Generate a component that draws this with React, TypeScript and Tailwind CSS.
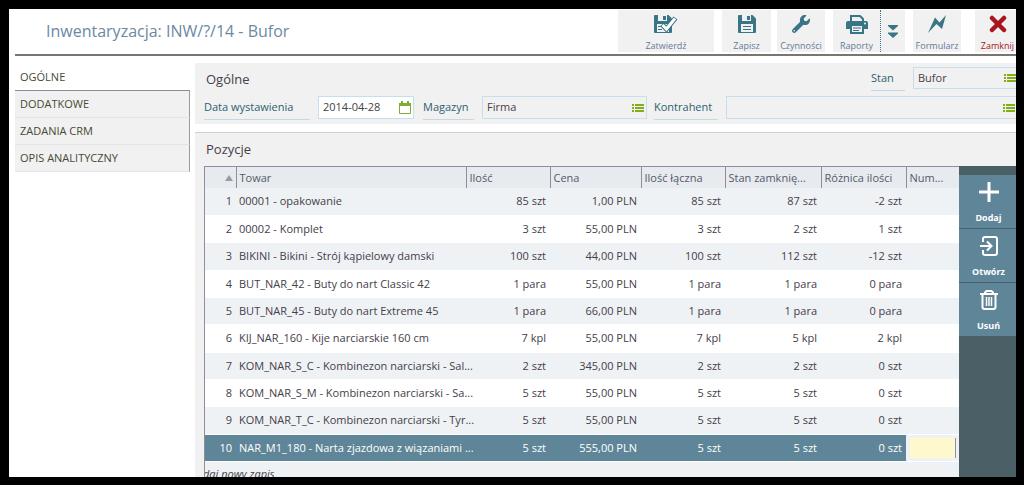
import type { ReactNode } from 'react';

const tabs = ['OGÓLNE', 'DODATKOWE', 'ZADANIA CRM', 'OPIS ANALITYCZNY'];

const columns = [
  { label: '', width: 'w-[31px]' },
  { label: 'Towar', width: '' },
  { label: 'Ilość', width: 'w-[84px]' },
  { label: 'Cena', width: 'w-[91px]' },
  { label: 'Ilość łączna', width: 'w-[84px]' },
  { label: 'Stan zamknięcia', short: 'Stan zamknię...', width: 'w-[96px]' },
  { label: 'Różnica ilości', width: 'w-[85px]' },
  { label: 'Numer', short: 'Num...', width: 'w-[53px]' },
];

const rows = [
  { name: '00001 - opakowanie', values: ['85 szt', '1,00 PLN', '85 szt', '87 szt', '-2 szt'] },
  { name: '00002 - Komplet', values: ['3 szt', '55,00 PLN', '3 szt', '2 szt', '1 szt'] },
  { name: 'BIKINI - Bikini - Strój kąpielowy damski', values: ['100 szt', '44,00 PLN', '100 szt', '112 szt', '-12 szt'] },
  { name: 'BUT_NAR_42 - Buty do nart Classic 42', values: ['1 para', '55,00 PLN', '1 para', '1 para', '0 para'] },
  { name: 'BUT_NAR_45 - Buty do nart Extreme 45', values: ['1 para', '66,00 PLN', '1 para', '1 para', '0 para'] },
  { name: 'KIJ_NAR_160 - Kije narciarskie 160 cm', values: ['7 kpl', '55,00 PLN', '7 kpl', '5 kpl', '2 kpl'] },
  { name: 'KOM_NAR_S_C - Kombinezon narciarski - Sal...', values: ['2 szt', '345,00 PLN', '2 szt', '2 szt', '0 szt'] },
  { name: 'KOM_NAR_S_M - Kombinezon narciarski - Sa...', values: ['5 szt', '55,00 PLN', '5 szt', '5 szt', '0 szt'] },
  { name: 'KOM_NAR_T_C - Kombinezon narciarski - Tyr...', values: ['5 szt', '55,00 PLN', '5 szt', '5 szt', '0 szt'] },
  { name: 'NAR_M1_180 - Narta zjazdowa z wiązaniami ...', values: ['5 szt', '555,00 PLN', '5 szt', '5 szt', '0 szt'], selected: true },
];

const SaveIcon = () => (
  <svg width="18" height="18" viewBox="0 0 18 18" fill="none">
    <path d="M1 0h13.500L18 3.500V17a1 1 0 0 1-1 1H1a1 1 0 0 1-1-1V1a1 1 0 0 1 1-1z" fill="#397587" />
    <path d="M4 0h9v6H4zM3 9h12v8H3z" fill="#f1f1f1" />
    <path d="M9 1h3v4H9zM5 11h8v1H5zM5 14h8v1H5z" fill="#397587" />
  </svg>
);

const ApproveIcon = () => (
  <svg width="24" height="18" viewBox="0 0 24 18" fill="none">
    <path d="M1 0h13.500L18 3.500V17a1 1 0 0 1-1 1H1a1 1 0 0 1-1-1V1a1 1 0 0 1 1-1z" fill="#397587" />
    <path d="M4 0h9v6H4zM3 9h12v8H3z" fill="#f1f1f1" />
    <path d="M9 1h3v4H9zM4 11h4v1H4zM4 14h4v1H4z" fill="#397587" />
    <path d="M8 9.500l4.500 4.500L21.500 3" stroke="#397587" strokeWidth="5" />
    <path d="M8.500 10l4 4L21 3.500" stroke="#fff" strokeWidth="3" />
  </svg>
);

const WrenchIcon = () => (
  <svg width="18" height="18" viewBox="0 0 512 512" fill="#397587">
    <path d="M507.730 109.100c-2.240-9.030-13.540-12.090-20.120-5.510l-74.360 74.360-67.880-11.310-11.310-67.880 74.360-74.360c6.620-6.620 3.430-17.900-5.660-20.160-47.380-11.740-99.550.91-136.580 37.930-39.640 39.640-50.550 97.100-34.050 147.200L18.740 402.760c-24.990 24.990-24.990 65.510 0 90.500 24.990 24.990 65.510 24.990 90.500 0l213.210-213.210c50.120 16.710 107.470 5.680 147.370-34.220 37.070-37.070 49.700-89.320 37.910-136.730zM64 472c-13.250 0-24-10.750-24-24 0-13.260 10.750-24 24-24s24 10.740 24 24c0 13.250-10.750 24-24 24z" />
  </svg>
);

const PrintIcon = () => (
  <svg width="22" height="19" viewBox="0 0 22 19" fill="none">
    <path d="M5 6V1h9l3 3v2" stroke="#397587" strokeWidth="2" />
    <path d="M2 6h18a2 2 0 0 1 2 2v6h-4v-3H4v3H0V8a2 2 0 0 1 2-2z" fill="#397587" />
    <path d="M5 10h12v8H5z" fill="#f1f1f1" stroke="#397587" strokeWidth="2" />
    <path d="M7 13h8M7 15.500h6" stroke="#397587" />
    <circle cx="19" cy="8.500" r="1" fill="#f1f1f1" />
  </svg>
);

const MoreIcon = () => (
  <svg width="10" height="13" viewBox="0 0 10 13" fill="#397587">
    <path d="M0 0h10v1L5 5.500 0 1zM0 7.500h10v1L5 13 0 8.500z" />
  </svg>
);

const BoltIcon = () => (
  <svg width="18" height="18" viewBox="0 0 18 18" fill="#397587">
    <path d="M7 2.500l4.500 5L18 0l-4 14-5.500-5L0 18z" />
  </svg>
);

const CloseIcon = () => (
  <svg width="18" height="18" viewBox="0 0 18 18" stroke="#a9151c" strokeWidth="4.500" strokeLinecap="round">
    <path d="M3 3l12 12M15 3L3 15" />
  </svg>
);

const CalendarIcon = () => (
  <svg className="shrink-0" width="12" height="13" viewBox="0 0 12 13" fill="none">
    <path d="M.5 3h11v9.500H.5z" stroke="#7fad33" />
    <path d="M0 2h12v3H0zM2 0h2v3H2zM8 0h2v3H8z" fill="#7fad33" />
  </svg>
);

const ListIcon = () => (
  <svg className="shrink-0" width="12" height="8" viewBox="0 0 12 8" fill="#84ad1c">
    <path d="M0 0h2v2H0zM3 0h9v2H3zM0 3h2v2H0zM3 3h9v2H3zM0 6h2v2H0zM3 6h9v2H3z" />
  </svg>
);

const PlusIcon = () => (
  <svg width="20" height="20" viewBox="0 0 20 20" stroke="#fff" strokeWidth="3">
    <path d="M10 0v20M0 10h20" />
  </svg>
);

const OpenIcon = () => (
  <svg width="18" height="20" viewBox="0 0 18 20" fill="none" stroke="#fff" strokeWidth="2">
    <path d="M3 6V3a2 2 0 0 1 2-2h10a2 2 0 0 1 2 2v14a2 2 0 0 1-2 2H5a2 2 0 0 1-2-2v-3M0 10h11M7 5.500l4.500 4.500L7 14.500" />
  </svg>
);

const TrashIcon = () => (
  <svg width="18" height="20" viewBox="0 0 18 20" fill="none" stroke="#fff" strokeWidth="2">
    <path d="M0 4h18M5 4V2.500L6.500 1h5L13 2.500V4M2.500 4v13a2 2 0 0 0 2 2h9a2 2 0 0 0 2-2V4" />
    <path d="M6.500 7v9M9 7v9M11.500 7v9" strokeWidth="1.500" />
  </svg>
);

const ToolButton = ({ label, icon, className }: { label: string; icon: ReactNode; className: string }) => (
  <button type="button" className={`flex h-[42px] shrink-0 flex-col items-center justify-between bg-[#f1f1f1] pt-1 text-[9px] leading-3 ${className}`}>
    <span className="flex h-5 items-center">{icon}</span>
    <span>{label}</span>
  </button>
);

const SideButton = ({ label, icon }: { label: string; icon: ReactNode }) => (
  <button type="button" className="flex h-[54px] flex-col items-center justify-between border-b border-[#46606c] bg-[#5f8698] pt-[7px] pb-1 pl-0.5 text-[9px] leading-3 font-bold text-white">
    {icon}
    <span>{label}</span>
  </button>
);

const labelClass = 'h-6 border-b border-[#c3d9e4] text-[11px] leading-[22px] whitespace-nowrap text-[#2c6170]';
const inputClass = 'w-full min-w-0 bg-transparent px-1 text-[11px] text-[#454049] outline-none';

const App = () => {
  return (
    <div className="h-screen overflow-hidden bg-black pt-[9px] pr-2 pb-2 pl-[9px] font-['Open_Sans',sans-serif] text-[#454049]">
      <div className="flex h-full flex-col overflow-hidden bg-white pl-1.5">
        <header className="flex h-[47px] shrink-0 items-start border-b-2 border-[#77776f]">
          <h1 className="flex-1 pt-2 pl-[31px] text-base leading-7 whitespace-nowrap text-[#6c88a2]">Inwentaryzacja: INW/?/14 - Bufor</h1>
          <div className="flex pt-px text-[#647b98]">
            <ToolButton label="Zatwierdź" icon={<ApproveIcon />} className="w-24" />
            <ToolButton label="Zapisz" icon={<SaveIcon />} className="ml-2 w-[49px]" />
            <ToolButton label="Czynności" icon={<WrenchIcon />} className="ml-1.5 w-12" />
            <ToolButton label="Raporty" icon={<PrintIcon />} className="ml-2 w-12 border-r border-dotted border-[#397587]" />
            <button type="button" aria-label="Więcej raportów" className="flex h-[42px] w-6 items-center justify-center bg-[#f1f1f1]">
              <MoreIcon />
            </button>
            <ToolButton label="Formularz" icon={<BoltIcon />} className="ml-2 w-12" />
            <ToolButton label="Zamknij" icon={<CloseIcon />} className="ml-3.5 w-[41px] pl-1 text-[#a9151c]" />
          </div>
        </header>

        <div className="flex min-h-0 flex-1 pt-[7px]">
          {/* Tabs */}
          <nav className="w-[175px] shrink-0 text-[11px] leading-[26px] text-[#454a35]">
            {tabs.map((tab, i) => (
              <a
                key={tab}
                href="#"
                className={i === 0
                  ? 'block h-7 border-b border-[#8b8b99] pt-px pl-[5px]'
                  : 'block border-r border-b border-r-[#9a9aa5] border-b-[#e4e4e4] bg-[#f1f1f1] pl-[5px]'}
              >
                {tab}
              </a>
            ))}
          </nav>

          <main className="ml-[5px] flex min-w-0 flex-1 flex-col bg-[#f1f1f1]">
            {/* General data */}
            <section className="border-b-8 border-white pb-1">
              <div className="flex pt-1">
                <h2 className="flex-1 pl-[11px] text-[13px] leading-6">Ogólne</h2>
                <label htmlFor="status" className={`w-[34px] ${labelClass}`}>Stan</label>
                <div className="ml-2 flex h-[22px] w-[103px] items-center border border-r-0 border-[#c5e0ec]">
                  <input id="status" defaultValue="Bufor" className={inputClass} />
                  <ListIcon />
                </div>
              </div>
              <div className="mt-[5px] flex pl-[9px]">
                <label htmlFor="date" className={`w-[106px] ${labelClass}`}>Data wystawienia</label>
                <div className="ml-2 flex h-[23px] w-24 items-center border border-[#c5e0ec] bg-white pr-0.5">
                  <input id="date" defaultValue="2014-04-28" className={inputClass} />
                  <CalendarIcon />
                </div>
                <label htmlFor="store" className={`ml-[9px] w-[51px] ${labelClass}`}>Magazyn</label>
                <div className="ml-2 flex h-[23px] w-[165px] items-center border border-[#c5e0ec] pr-0.5">
                  <input id="store" defaultValue="Firma" className={inputClass} />
                  <ListIcon />
                </div>
                <label htmlFor="client" className={`ml-[7px] w-16 ${labelClass}`}>Kontrahent</label>
                <div className="ml-2 flex h-[23px] min-w-0 flex-1 items-center border border-r-0 border-[#c5e0ec] pr-px">
                  <input id="client" className={inputClass} />
                  <ListIcon />
                </div>
              </div>
            </section>

            {/* Items */}
            <section className="flex min-h-0 flex-1 flex-col overflow-hidden border-t border-[#ccd0d4]">
              <h2 className="h-[33px] shrink-0 pt-1 pl-[11px] text-[13px] leading-6">Pozycje</h2>
              <div className="flex min-h-0 flex-1 pl-[9px]">
                <div className="min-w-0 flex-1 overflow-hidden border-t border-l border-[#8e8e9f] bg-[#eff2f5]">
                  <table className="w-full table-fixed border-collapse text-[11px] leading-4">
                    <thead>
                      <tr className="h-[21px] bg-[#e7eaef] text-left text-[#555a68]">
                        {columns.map((col, i) => (
                          <th key={i} title={col.label} className={`border-r border-[#8e8e9f] p-0 pl-[3px] font-normal whitespace-nowrap last:border-r-0 ${col.width}`}>
                            {i === 0 ? (
                              <svg className="mr-[3px] ml-auto" width="8" height="6" viewBox="0 0 8 6" fill="#9b9ba3">
                                <path d="M4 0l4 6H0z" />
                              </svg>
                            ) : col.short ?? col.label}
                          </th>
                        ))}
                      </tr>
                    </thead>
                    <tbody>
                      {rows.map((row, i) => (
                        <tr
                          key={row.name}
                          className={`h-[27px] border-b border-white nth-[3n]:h-7 ${row.selected ? 'bg-[#5f8698] font-medium text-white' : 'odd:bg-[#eff2f5] even:bg-white'}`}
                        >
                          <td className="p-0 pr-1 text-right">{i + 1}</td>
                          <td className="p-0 pl-[3px] whitespace-nowrap">{row.name}</td>
                          {row.values.map((value, j) => (
                            <td key={j} className="p-0 pr-1 text-right whitespace-nowrap">{value}</td>
                          ))}
                          <td className={row.selected ? 'bg-[#eff2f5] p-0 pl-1' : 'p-0'}>
                            {row.selected && (
                              <input aria-label="Numer" className="block h-5 w-[46px] border-r border-[#8e8e9f] bg-[#fff8cf] outline-none" />
                            )}
                          </td>
                        </tr>
                      ))}
                    </tbody>
                  </table>
                  <p className="pt-0.5 -indent-0.5 text-[11px] leading-5 italic">daj nowy zapis</p>
                </div>
                <aside className="flex w-[57px] shrink-0 flex-col border-t-[9px] border-[#4b5f66] bg-[#4b5f66]">
                  <SideButton label="Dodaj" icon={<PlusIcon />} />
                  <SideButton label="Otwórz" icon={<OpenIcon />} />
                  <SideButton label="Usuń" icon={<TrashIcon />} />
                </aside>
              </div>
            </section>
          </main>
        </div>
      </div>
    </div>
  );
};

export default App;
